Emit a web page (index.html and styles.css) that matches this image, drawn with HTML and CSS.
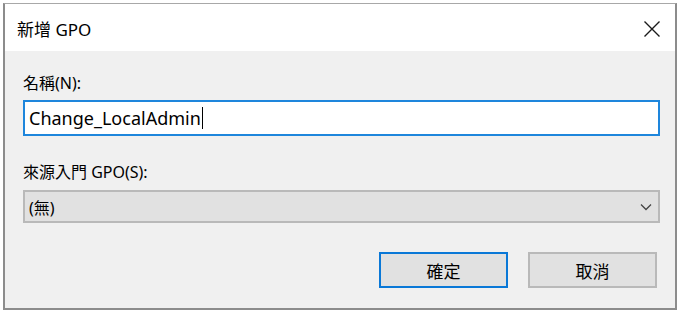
FILE: index.html
```html
<html>
	<head>
		<meta charset="utf-8">
		<link rel="stylesheet" href="styles.css">
	</head>
	<body>
		<div class="window">
			<div class="titlebar">
				<span class="title">新增 GPO</span>
				<svg class="close" width="18" height="18" viewBox="0 0 18 18">
					<path d="M1.5 1.5 L16.5 16.5 M16.5 1.5 L1.5 16.5" stroke="#1a1a1a" stroke-width="1.4" fill="none"/>
				</svg>
			</div>
			<div class="client">
				<div class="label label-name">名稱(N):</div>
				<div class="textbox"><span class="value">Change_LocalAdmin</span><span class="caret"></span></div>
				<div class="label label-src">來源入門 GPO(S):</div>
				<div class="combo">
					<span class="value">(無)</span>
					<svg class="chevron" width="12" height="8" viewBox="0 0 12 8">
						<path d="M1 1.5 L6 6.5 L11 1.5" stroke="#444" stroke-width="1.3" fill="none"/>
					</svg>
				</div>
				<div class="buttons">
					<div class="button default">確定</div>
					<div class="button">取消</div>
				</div>
			</div>
		</div>
	</body>
</html>
```
FILE: styles.css
```css
html, body {
	margin: 0;
	padding: 0;
	background: #ffffff;
	font-family: "Noto Sans", "Noto Sans CJK TC", sans-serif;
	color: #000000;
}
.window {
	margin: 3px 4px 0 3px;
	height: 304px;
	border: 2px solid #8c8c8c;
	border-top: 1px solid #a8a8a8;
	display: flex;
	flex-direction: column;
	background: #f0f0f0;
}
.titlebar {
	height: 47px;
	background: #ffffff;
	display: flex;
	align-items: center;
	justify-content: space-between;
	padding: 0 14px 0 12px;
}
.title {
	font-size: 17px;
	color: #000000;
	margin-top: 2px;
}
.close {
	margin-top: 2px;
}
.client {
	flex: 1;
	padding: 0 15px 0 18px;
	display: flex;
	flex-direction: column;
}
.label {
	font-size: 16px;
	line-height: 20px;
	color: #000000;
}
.label-name {
	margin-top: 22px;
}
.label-src {
	margin-top: 26px;
}
.textbox {
	margin-top: 7px;
	height: 32px;
	background: #ffffff;
	border: 2px solid #1e86dc;
	display: flex;
	align-items: center;
	padding-left: 4px;
	font-size: 18px;
}
.caret {
	display: inline-block;
	width: 1px;
	height: 22px;
	background: #000000;
	margin-left: 1px;
}
.combo {
	margin-top: 8px;
	height: 29px;
	background: #e1e1e1;
	border: 2px solid #b9b9b9;
	display: flex;
	align-items: center;
	justify-content: space-between;
	padding: 0 6px 0 4px;
	font-size: 16px;
}
.buttons {
	margin-top: 29px;
	display: flex;
	justify-content: flex-end;
	gap: 20px;
	padding-right: 3px;
}
.button {
	width: 125px;
	height: 32px;
	background: #e1e1e1;
	border: 2px solid #b9b9b9;
	display: flex;
	align-items: center;
	justify-content: center;
	font-size: 17px;
}
.button.default {
	border-color: #0a78d7;
}
```
